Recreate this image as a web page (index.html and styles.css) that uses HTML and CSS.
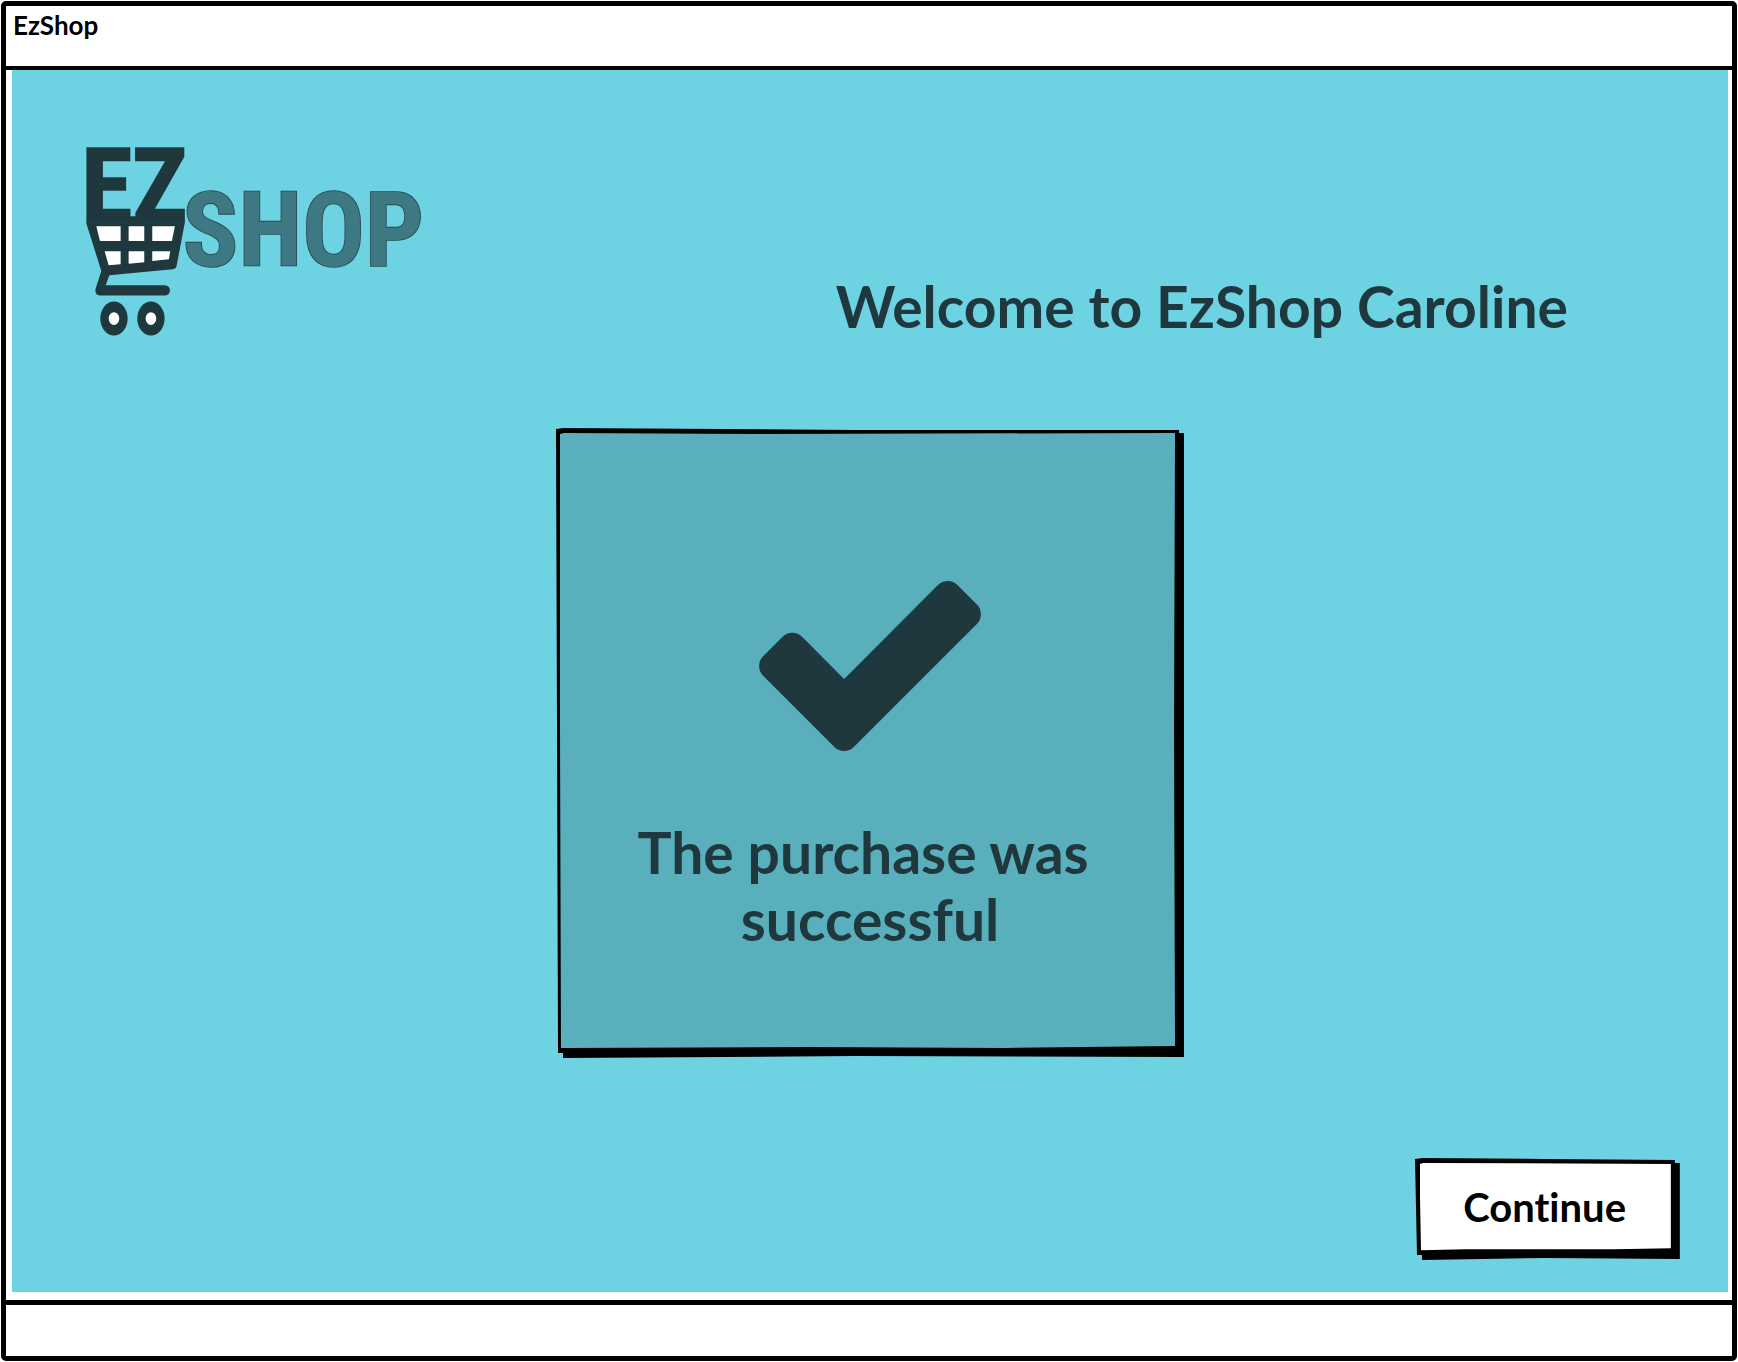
FILE: index.html
```html
<!DOCTYPE html>
<html lang="en">
<head>
<meta charset="utf-8">
<meta name="viewport" content="width=device-width, initial-scale=1">
<title>EzShop</title>
<link rel="stylesheet" href="styles.css">
</head>
<body>
<div class="window">
  <div class="titlebar">EzShop</div>
  <main class="screen">
    <header class="top">
      <svg class="logo" viewBox="48 45 1009 663" role="img" aria-label="EZ Shop">
        <text class="logo-ez" x="34" y="367">EZ</text>
        <text class="logo-shop" x="338" y="498">SHOP</text>
        <path class="cart" d="M48 367H178V349H212V367H345L320 498Q318 507 308 508L118 526L107 556H284Q300 557 300 572Q299 587 284 587H92Q73 585 77 566L94 513Z"/>
        <path class="hole" d="M79 379H152V423H90ZM176 379H223V423H176ZM247 379H315L306 423H247ZM104 454H152V493L116 496ZM176 454H223V487L176 491ZM247 454H301L297 478L247 483Z"/>
        <ellipse class="cart" cx="132" cy="656" rx="41" ry="51"/>
        <ellipse class="cart" cx="243" cy="656" rx="41" ry="51"/>
        <ellipse class="hole" cx="132" cy="656" rx="16" ry="19"/>
        <ellipse class="hole" cx="243" cy="656" rx="16" ry="19"/>
      </svg>
      <h1 class="welcome">Welcome to EzShop Caroline</h1>
    </header>
    <section class="card">
      <svg class="sketch" viewBox="0 0 629 630" preserveAspectRatio="none" aria-hidden="true">
        <path d="M0 1L8 0L300 2L624 2V5L629 5V629L300 628L7 630V625H2L1 300Z"/>
        <path class="card-fill" d="M4 6L8 5L200 6L620 5L619 300L620 618L450 620L250 619L5 620L4 300Z"/>
      </svg>
      <svg class="check" viewBox="121 334 1550 1188" role="img" aria-label="Success"><path d="M1671 566q0 40-28 68l-724 724-136 136q-28 28-68 28t-68-28l-136-136-362-362q-28-28-28-68t28-68l136-136q28-28 68-28t68 28l294 295 656-657q28-28 68-28t68 28l136 136q28 28 28 68z"/></svg>
      <p class="message">The purchase was&nbsp;<br>successful</p>
    </section>
    <div class="actions">
      <button class="continue" type="button">
        <svg class="sketch" viewBox="0 0 265 104" preserveAspectRatio="none" aria-hidden="true">
          <path d="M0 1L8 0L130 1L260 2V5H265V103L130 102L7 104V99H2L1 50Z"/>
          <path class="button-fill" d="M5 6L8 5L256 6V92L200 93L110 93L50 93L6 94L5 40Z"/>
        </svg>
        <span class="label">Continue</span>
      </button>
    </div>
  </main>
  <footer class="statusbar"></footer>
</div>
</body>
</html>
```
FILE: styles.css
```css
* {
  box-sizing: border-box;
}

body {
  display: flex;
  min-height: 100vh;
  margin: 0;
  padding: 1px;
  background: #fff;
  color: #000;
  font-family: Lato, "Open Sans", sans-serif;
  font-weight: 700;
  font-variant-ligatures: none;
}

.window {
  display: flex;
  flex: 1;
  flex-direction: column;
  border: 5px solid #000;
  border-radius: 5px;
}

.titlebar {
  height: 64px;
  padding: 4px 7px;
  border-bottom: 4px solid #000;
  font-size: 26px;
  line-height: 30px;
}

.screen {
  display: flex;
  flex: 1;
  flex-direction: column;
  margin: 0 4px 8px 6px;
  padding: 45px 48px 32px;
  background: #6dd3e2;
}

.top {
  display: flex;
  align-items: flex-end;
  justify-content: space-between;
  padding: 0 112px 0 26px;
}

.logo {
  width: 336px;
  height: 221px;
  overflow: visible;
}

.logo-ez,
.logo-shop {
  font-family: "Roboto Condensed", "Liberation Sans Narrow", "Open Sans Condensed", sans-serif;
  font-size: 312px;
  font-weight: 700;
  paint-order: stroke;
  stroke-width: 5px;
}

.logo-ez {
  fill: #1e383d;
  stroke: #1e383d;
}

.logo-shop {
  fill: #3d7883;
  stroke: #264a50;
}

.cart {
  fill: #1e383d;
}

.hole {
  fill: #fff;
}

.welcome {
  margin: 0;
  color: #1e383d;
  font-size: 57px;
  line-height: 60px;
}

.card {
  position: relative;
  display: flex;
  flex-direction: column;
  align-items: center;
  align-self: center;
  width: 628px;
  margin: 92px 0 0;
  padding: 153px 0 105px;
}

.sketch {
  position: absolute;
  inset: 0;
  width: 100%;
  height: 100%;
}

.card-fill {
  fill: #5aafbd;
}

.button-fill {
  fill: #fff;
}

.check {
  position: relative;
  width: 222px;
  height: 170px;
  fill: #1e383d;
}

.message {
  position: relative;
  margin: 68px 0 0;
  color: #1e383d;
  font-size: 57px;
  line-height: 67px;
  text-align: center;
}

.actions {
  display: flex;
  justify-content: flex-end;
  margin-top: auto;
}

.continue {
  position: relative;
  padding: 25px 54px 29px 48px;
  border: 0;
  background: none;
  color: #000;
  font: inherit;
  font-size: 40px;
  line-height: 48px;
  cursor: pointer;
}

.label {
  position: relative;
}

.statusbar {
  height: 56px;
  border-top: 5px solid #000;
}
```
